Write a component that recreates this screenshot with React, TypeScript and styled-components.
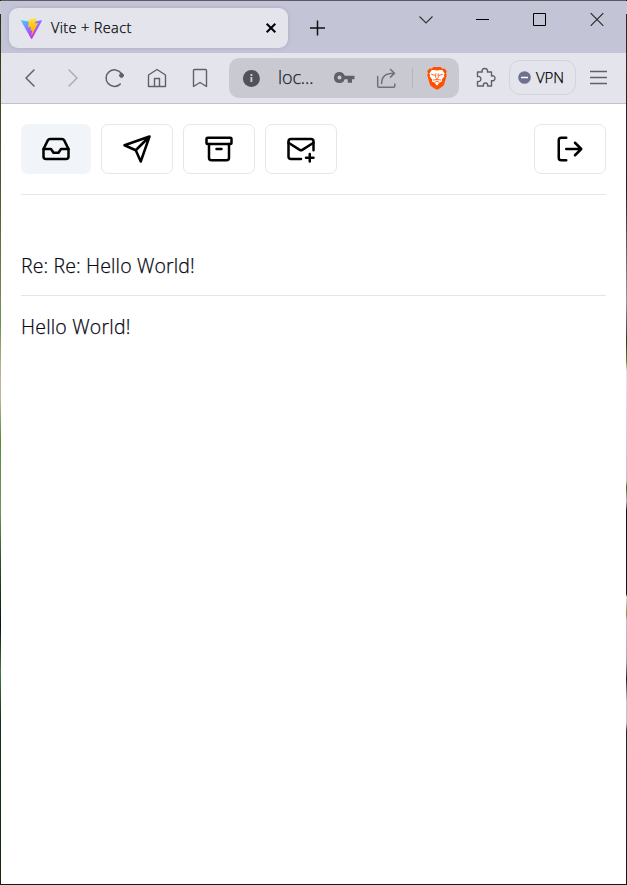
import React from "react";
import styled, { createGlobalStyle } from "styled-components";

const GlobalStyle = createGlobalStyle`
  * { box-sizing: border-box; }
  html, body { margin: 0; padding: 0; background: #fff; }
  body { font-family: "Open Sans", "Noto Sans", sans-serif; color: #000; -webkit-text-stroke: 0.25px currentColor; }
  svg { display: block; flex: none; }
  button { font: inherit; color: inherit; margin: 0; padding: 0; background: none; border: 0; }
`;

const Desktop = styled.div`
  width: 627px;
  height: 885px;
  padding: 0 1px 1px;
  background:
    linear-gradient(to bottom, #c9c9cd 0 13px, #283018 13px, #3e4a22 100px, #4e5a30 190px, #75885a 300px, #6a8f45 320px, #b9ae8f 365px, #c2b79d 395px, #568a35 440px, #6b985a 510px, #2a5527 560px, #07150a 625px, #477a43 670px, #14301a 720px, #17260f 100%) left / 1px 884px no-repeat,
    linear-gradient(to bottom, #c9c9cd 0 13px, #232c22 13px, #132b16 190px, #999 300px, #183e24 340px, #57832d 360px, #eee5ea 370px, #c8bfbb 480px, #277317 486px, #bcb5ae 500px, #061a0d 510px, #092011 593px, #e5dfdf 596px, #8e8744 613px, #c9c0bd 620px, #b0aaa2 660px, #192419 678px, #c8c2c4 700px, #c5bec3 722px, #143020 730px, #0b1d10 100%) right / 1px 884px no-repeat,
    #171e16;
`;

const Window = styled.div`
  height: 884px;
  display: flex;
  flex-direction: column;
  background: #fff;
  border-top: 1px solid #5c5a65;
`;

const TabStrip = styled.header`
  height: 52px;
  flex: none;
  display: flex;
  padding: 7px 1px 5px 8px;
  background: #c4c4d7;
`;

const Tab = styled.div`
  width: 279px;
  height: 40px;
  display: flex;
  align-items: center;
  padding: 0 11px 0 12px;
  border-radius: 9px;
  background: #e4e4ed;
  box-shadow: 0 0 4px rgba(80, 80, 120, 0.2);
`;

const TabTitle = styled.span`
  flex: 1;
  margin-left: 9px;
  font-size: 14.5px;
  font-weight: 300;
  letter-spacing: 0.36px;
  line-height: 20px;
`;

const NewTab = styled.button`
  width: 24px;
  height: 24px;
  margin: 8px 0 0 17px;
`;

const WindowControls = styled.div`
  display: grid;
  grid-template-columns: repeat(4, 57px);
  margin: -1px 0 0 auto;
  height: 24px;
  justify-items: center;
  align-items: center;
`;

const Toolbar = styled.nav`
  height: 51px;
  flex: none;
  display: flex;
  align-items: center;
  padding: 0 18px 1px 8px;
  background: #e4e4ed;
  border-bottom: 1px solid #c3c1cd;
`;

const NavButtons = styled.div`
  display: grid;
  grid-template-columns: repeat(5, 42.4px);
  justify-items: center;
  margin-right: 8px;
`;

const AddressBar = styled.div`
  width: 230px;
  height: 40px;
  display: flex;
  align-items: center;
  padding: 0 10px;
  border-radius: 10px;
  background: #c9c9d1;
`;

const Address = styled.span`
  width: 46px;
  margin-left: 15px;
  font-size: 18px;
  font-weight: 300;
  letter-spacing: -0.1px;
  line-height: 22px;
  padding-bottom: 2px;
  color: #182230;
`;

const AddressDivider = styled.i`
  width: 1px;
  height: 20px;
  margin: 0 14px 0 13px;
  background: #b5b5bd;
`;

const VpnButton = styled.button`
  width: 67px;
  height: 35px;
  display: flex;
  align-items: center;
  gap: 5px;
  && {
    padding: 0 0 1px 8px;
    border: 1px solid #d3d3dc;
    font-size: 15px;
    font-weight: 300;
  }
  border-radius: 11px;
  letter-spacing: -0.1px;
`;

const Extensions = styled.div`
  width: 50px;
  display: flex;
  justify-content: center;
  padding-left: 2px;
`;

const Menu = styled.button`
  && { margin-left: auto; }
`;

const Page = styled.main`
  flex: 1;
  padding: 20px;
`;

const MailBar = styled.div`
  display: flex;
  gap: 10px;
  height: 71px;
  border-bottom: 1px solid #e2e8f0;
`;

const MailButton = styled.button<{ $active?: boolean; $end?: boolean }>`
  width: ${(p) => (p.$active ? 70 : 72)}px;
  height: 50px;
  display: flex;
  align-items: center;
  justify-content: center;
  border-radius: 7px;
  border: ${(p) => (p.$active ? "0" : "1px solid #e2e8f0")};
  background: ${(p) => (p.$active ? "#f1f5f9" : "#fff")};
  margin-left: ${(p) => (p.$end ? "auto" : "0")};
`;

const Message = styled.article`
  padding-top: 57px;
  font-size: 19.5px;
  font-weight: 300;
  line-height: 28px;
  color: #080814;
`;

const Subject = styled.h1`
  margin: 0;
  padding-bottom: 15px;
  border-bottom: 1px solid #e2e4ef;
  font: inherit;
  letter-spacing: 0.13px;
`;

const Body = styled.p`
  margin: 17px 0 0;
  letter-spacing: 0.2px;
`;

type IconProps = { children: React.ReactNode; size?: number; color?: string; stroke?: number; fill?: string };

const Icon = ({ children, size = 24, color = "#606168", stroke = 1.5, fill = "none" }: IconProps) => (
  <svg width={size} height={size} viewBox="0 0 24 24" fill={fill} stroke={color}
    strokeWidth={stroke} strokeLinecap="round" strokeLinejoin="round">{children}</svg>
);

const MailIcon = ({ children }: { children: React.ReactNode }) => (
  <Icon size={30} color="#000" stroke={2}>{children}</Icon>
);

const ViteLogo = () => (
  <svg width="21" height="21" viewBox="0 0 256 257">
    <defs>
      <linearGradient id="vite" x1="0" x2=".58" y1="0" y2=".79">
        <stop offset="0" stopColor="#41d1ff" /><stop offset="1" stopColor="#bd34fe" />
      </linearGradient>
      <linearGradient id="bolt" x1=".43" x2=".5" y1=".02" y2=".9">
        <stop offset="0" stopColor="#ffea83" /><stop offset=".08" stopColor="#ffdd35" /><stop offset="1" stopColor="#ffa800" />
      </linearGradient>
    </defs>
    <path fill="url(#vite)" d="M255.2 37.9 134.9 252.8a6.5 6.5 0 0 1-11.3.1L.9 37.9A6.5 6.5 0 0 1 7.7 28.2l120.4 21.5a6.5 6.5 0 0 0 2.3 0L248.3 28.3a6.5 6.5 0 0 1 6.9 9.6Z" />
    <path fill="url(#bolt)" d="M185.4 0 96.4 17.5a3.3 3.3 0 0 0-2.6 3l-5.5 92.4a3.3 3.3 0 0 0 4 3.4l24.8-5.7a3.3 3.3 0 0 1 3.9 3.8l-7.3 36a3.3 3.3 0 0 0 4.1 3.8l15.3-4.6a3.3 3.3 0 0 1 4.1 3.8l-11.7 56.6c-.7 3.6 4 5.5 6 2.5l1.3-2 72.5-144.7c1.2-2.4-.9-5.2-3.5-4.7l-25.5 4.9a3.3 3.3 0 0 1-3.8-4.1l16.7-57.7a3.3 3.3 0 0 0-3.8-4.2Z" />
  </svg>
);

const BraveLogo = () => (
  <svg width="20" height="24" viewBox="0 0 20 24">
    <path fill="#ff5000" d="M6.3.9 4.7 2.7l-2.2-.3L.2 5.2 1 7.2.3 9l2.5 9.2c.3 1 1 1.8 1.8 2.4l4.1 2.6c.8.5 1.8.5 2.6 0l4.1-2.6c.9-.6 1.5-1.4 1.8-2.4L19.7 9 19 7.2l.8-2-2.3-2.8-2.2.3L13.7.9Z" />
    <path fill="#fff" d="m10 4.6-2.6-.6-2.7.1L2.3 7.7l.9 1.5-.5 1.4 2.5 2.9-.2 2 2.4.9L10 19.7l2.6-3.3 2.4-.9-.2-2 2.5-2.9-.5-1.4.9-1.5L15.3 4.1 12.6 4Z" />
    <path fill="none" stroke="#ff5000" strokeWidth=".9" d="m4.2 8.3 4 1.1M15.8 8.3l-4 1.1M8.900 7.500l-.2 3.900 1.300 1.400 1.300-1.400-.2-3.900M6 14.100l4-.6 4 .6M7.700 16.400l2.300-1.300 2.300 1.300" />
  </svg>
);

export default function App() {
  return (
    <>
      <GlobalStyle />
      <Desktop>
        <Window>
          <TabStrip>
            <Tab>
              <ViteLogo />
              <TabTitle>Vite + React</TabTitle>
              <svg width="12" height="12" viewBox="0 0 12 12" stroke="#000" strokeWidth="2"><path d="m1.7 1.7 8.6 8.6m0-8.6-8.6 8.6" /></svg>
            </Tab>
            <NewTab aria-label="New tab">
              <svg width="24" height="24" stroke="#111" strokeWidth="1.5"><path d="M12.5 4.5v15M5 12h15" /></svg>
            </NewTab>
            <WindowControls>
              <svg width="14" height="14" fill="none" stroke="#333" strokeWidth="1.1"><path d="m.5 4.500 6.500 6.500L13.500 4.500" /></svg>
              <svg width="13" height="13" stroke="#000"><path d="M0 6.500h13" /></svg>
              <svg width="13" height="13" fill="none" stroke="#000"><path d="M.5.5h12v12H.5Z" /></svg>
              <svg width="14" height="14" stroke="#222" strokeWidth="1.1"><path d="m.7 1.200 12.600 12.600m0-12.600L.7 13.800" /></svg>
            </WindowControls>
          </TabStrip>

          <Toolbar>
            <NavButtons>
              <Icon><path d="m16 4-8 8 8 8" /></Icon>
              <Icon color="#acacb4"><path d="m8 4 8 8-8 8" /></Icon>
              <Icon><path d="M17.200 18.100A8.300 8.300 0 1 1 18.200 7.300" /><circle cx="18.500" cy="9.400" r="2" fill="#606168" stroke="#606168" strokeWidth="1" /></Icon>
              <Icon stroke={1.4}><path d="m3.500 9 8.500-5.500L20.500 9v11.500h-17ZM9.500 20.500v-8h5v8" /></Icon>
              <Icon stroke={1.4}><path d="M5.500 4.500q0-1 1-1h11q1 0 1 1v16L12 16.500l-6.500 4Z" /></Icon>
            </NavButtons>
            <AddressBar>
              <Icon fill="#505459" color="none"><circle cx="12.400" cy="12.400" r="8.500" /><path d="M11.500 11h1.800v5h-1.800zM11.500 8h1.800v1.900h-1.800z" fill="#d1d1d8" /></Icon>
              <Address>loc...</Address>
              <svg width="51" height="24" viewBox="0 0 51 24" fill="#606168"><path fillRule="evenodd" d="M15.500 6a5.500 5.500 0 1 0 5.200 7.200h3v3.500H28v-3.500h2.500V9.800h-9.800A5.500 5.500 0 0 0 15.500 6Zm0 3.500a2 2 0 1 1 0 4 2 2 0 0 1 0-4Z" /></svg>
              <Icon color="#707177"><path d="M2.700 10.500V20q0 1.200 1.200 1.200h14.700q1.200 0 1.200-1.200v-2M6.600 17.500c0-6 3.500-10.200 12-10.200M15.500 3.500l4 3.800-4 3.800" /></Icon>
              <AddressDivider />
              <BraveLogo />
            </AddressBar>
            <Extensions>
              <Icon stroke={1.4}><path d="M4.500 6h4.800c-.9-2 .5-3.500 2.500-3.500S15.200 4 14.300 6h4.200v4c2.200-.6 3.500.4 3.500 2.300s-1.500 3-3.500 2.300V20h-4c.6-2-.4-3-2-3s-2.600 1-2 3H4.500v-4.500c2.200.5 3.400-.8 3.400-2.500s-1.200-3-3.400-2.500Z" /></Icon>
            </Extensions>
            <VpnButton>
              <svg width="13" height="13" viewBox="0 0 13 13"><circle cx="6.500" cy="6.500" r="6.300" fill="#6d718f" /><path d="M3 6.500h7" stroke="#fff" strokeWidth="1.500" /></svg>
              VPN
            </VpnButton>
            <Menu aria-label="Menu"><svg width="19" height="19" stroke="#606168" strokeWidth="1.400"><path d="M1 3.500h17M1 9.500h17M1 15.500h17" /></svg></Menu>
          </Toolbar>

          <Page>
            <MailBar>
              <MailButton $active aria-label="Inbox"><MailIcon><path d="M22 12h-6l-2 3h-4l-2-3H2" /><path d="M5.450 5.110 2 12v6a2 2 0 0 0 2 2h16a2 2 0 0 0 2-2v-6l-3.450-6.890A2 2 0 0 0 16.760 4H7.240a2 2 0 0 0-1.790 1.110z" /></MailIcon></MailButton>
              <MailButton aria-label="Sent"><MailIcon><path d="m22 2-7 20-4-9-9-4ZM22 2 11 13" /></MailIcon></MailButton>
              <MailButton aria-label="Archive"><MailIcon><rect width="20" height="5" x="2" y="3" rx="1" /><path d="M4 8v11a2 2 0 0 0 2 2h12a2 2 0 0 0 2-2V8M10 12h4" /></MailIcon></MailButton>
              <MailButton aria-label="Compose"><MailIcon><path d="M22 13V6a2 2 0 0 0-2-2H4a2 2 0 0 0-2 2v12c0 1.100.9 2 2 2h8" /><path d="m22 7-8.970 5.700a1.940 1.940 0 0 1-2.060 0L2 7M19 16v6M16 19h6" /></MailIcon></MailButton>
              <MailButton $end aria-label="Log out"><MailIcon><path d="M9 21H5a2 2 0 0 1-2-2V5a2 2 0 0 1 2-2h4M16 17l5-5-5-5M21 12H9" /></MailIcon></MailButton>
            </MailBar>
            <Message>
              <Subject>Re: Re: Hello World!</Subject>
              <Body>Hello World!</Body>
            </Message>
          </Page>
        </Window>
      </Desktop>
    </>
  );
}
